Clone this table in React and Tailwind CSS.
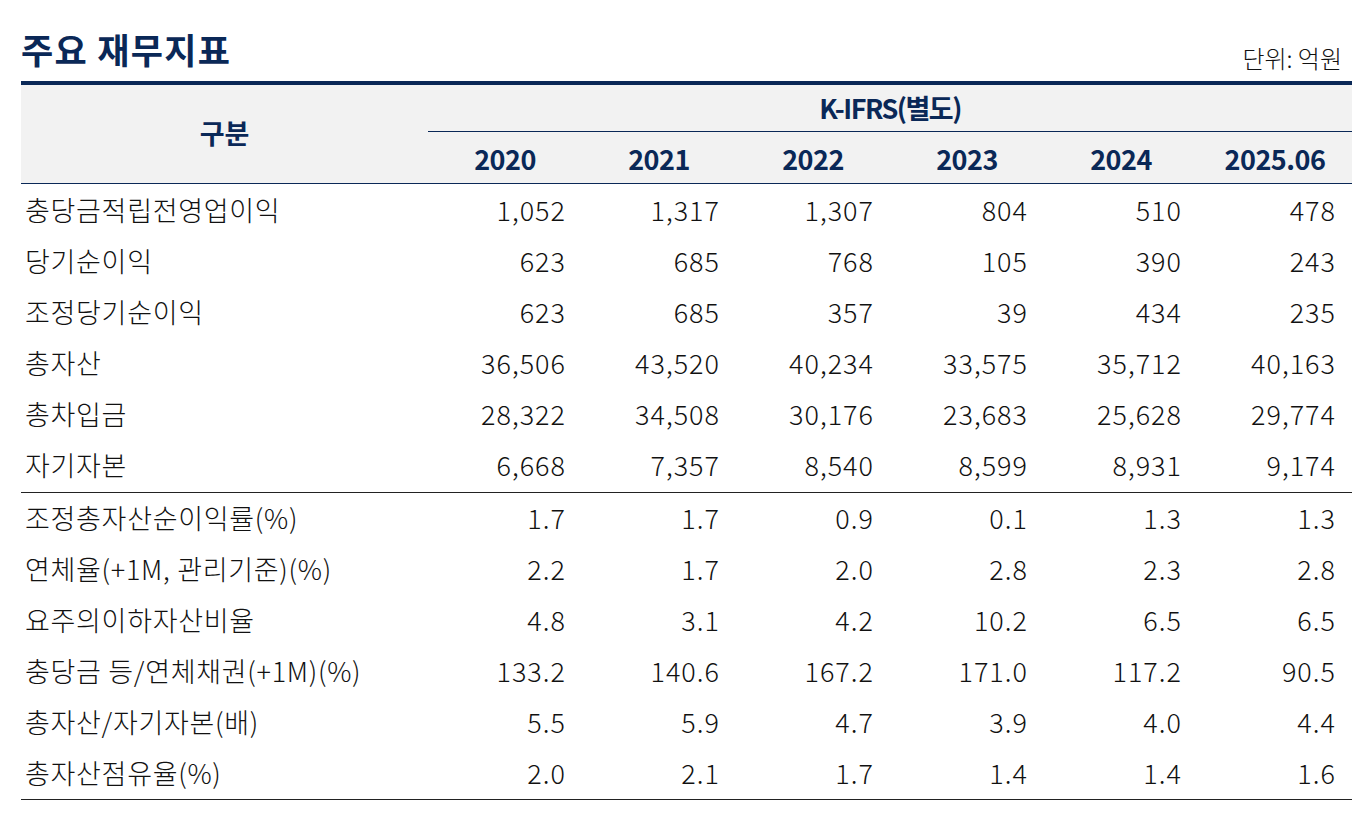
import React from "react";

const NAVY = "text-[#0a2857]";

const rows1 = [
  ["충당금적립전영업이익", "1,052", "1,317", "1,307", "804", "510", "478"],
  ["당기순이익", "623", "685", "768", "105", "390", "243"],
  ["조정당기순이익", "623", "685", "357", "39", "434", "235"],
  ["총자산", "36,506", "43,520", "40,234", "33,575", "35,712", "40,163"],
  ["총차입금", "28,322", "34,508", "30,176", "23,683", "25,628", "29,774"],
  ["자기자본", "6,668", "7,357", "8,540", "8,599", "8,931", "9,174"],
];
const rows2 = [
  ["조정총자산순이익률(%)", "1.7", "1.7", "0.9", "0.1", "1.3", "1.3"],
  ["연체율(+1M, 관리기준)(%)", "2.2", "1.7", "2.0", "2.8", "2.3", "2.8"],
  ["요주의이하자산비율", "4.8", "3.1", "4.2", "10.2", "6.5", "6.5"],
  ["충당금 등/연체채권(+1M)(%)", "133.2", "140.6", "167.2", "171.0", "117.2", "90.5"],
  ["총자산/자기자본(배)", "5.5", "5.9", "4.7", "3.9", "4.0", "4.4"],
  ["총자산점유율(%)", "2.0", "2.1", "1.7", "1.4", "1.4", "1.6"],
];
const years = ["2020", "2021", "2022", "2023", "2024", "2025.06"];

function Row({ r }) {
  return (
    <div className="grid grid-cols-[407px_repeat(6,154px)] h-[51px] items-center font-light">
      <div className="pl-[4px] whitespace-nowrap tracking-[0.7px]">{r[0]}</div>
      {r.slice(1).map((v, i) => (
        <div key={i} className="text-right pr-[16px] tracking-[1px]">{v}</div>
      ))}
    </div>
  );
}

export default function App() {
  return (
    <div
      className="bg-white w-[1368px] h-[816px] text-[#111] pl-[21px]"
      style={{ fontFamily: '"Noto Sans CJK KR", "Noto Sans", sans-serif' }}
    >
      <div className="w-[1331px] h-[81px] flex justify-between items-start">
        <div className={`pt-[24px] text-[35px] leading-[50px] font-bold tracking-[1.3px] ${NAVY}`}>
          주요 재무지표
        </div>
        <div className="pt-[40px] pr-[10px] text-[24px] leading-[36px] text-[#111] font-light">단위: 억원</div>
      </div>
      <div className="w-[1331px] border-t-4 border-[#0a2857] text-[27px]">
        <div className={`bg-[#f2f2f2] grid grid-cols-[407px_repeat(6,154px)] grid-rows-[47px_51px] border-b border-[#0a2857] font-bold ${NAVY}`}>
          <div className="row-span-2 flex items-center justify-center pb-[2px]">구분</div>
          <div className="col-span-6 flex items-center justify-center border-b border-[#0a2857] tracking-[-1.5px]">
            K-IFRS(별도)
          </div>
          {years.map((y) => (
            <div key={y} className="flex items-center justify-center pt-[3px] tracking-[-0.5px]">{y}</div>
          ))}
        </div>
        <div className="border-b border-[#222] py-[1px]">
          {rows1.map((r) => (
            <Row key={r[0]} r={r} />
          ))}
        </div>
        <div className="border-b border-[#222]">
          {rows2.map((r) => (
            <Row key={r[0]} r={r} />
          ))}
        </div>
      </div>
    </div>
  );
}
